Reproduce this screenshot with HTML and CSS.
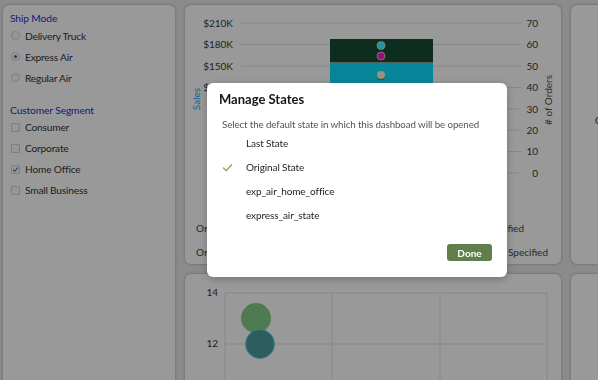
FILE: index.html
```html
<!DOCTYPE html>
<html lang="en">
<head>
<meta charset="utf-8">
<title>Dashboard - Manage States</title>
<link rel="stylesheet" href="styles.css">
</head>
<body>
<div class="dashboard">
  <aside class="panel filters">
    <div class="group">
      <h3 class="group-title">Ship Mode</h3>
      <div class="opt"><span class="radio"></span>Delivery Truck</div>
      <div class="opt"><span class="radio on"></span>Express Air</div>
      <div class="opt"><span class="radio"></span>Regular Air</div>
    </div>
    <div class="group">
      <h3 class="group-title">Customer Segment</h3>
      <div class="opt"><span class="check"></span>Consumer</div>
      <div class="opt"><span class="check"></span>Corporate</div>
      <div class="opt"><span class="check on"><svg viewBox="0 0 9 9" width="9" height="9"><path d="M1.5 4.6 L3.6 6.8 L7.6 2.2"/></svg></span>Home Office</div>
      <div class="opt"><span class="check"></span>Small Business</div>
    </div>
  </aside>

  <section class="panel chart-top">
    <svg class="chart" viewBox="0 0 376 259" width="376" height="259">
      <g class="grid">
        <line x1="56" x2="336" y1="18" y2="18"/>
        <line x1="56" x2="336" y1="39.5" y2="39.5"/>
        <line x1="56" x2="336" y1="61" y2="61"/>
        <line x1="56" x2="336" y1="82.5" y2="82.5"/>
        <line x1="56" x2="336" y1="104" y2="104"/>
        <line x1="56" x2="336" y1="125" y2="125"/>
        <line x1="56" x2="336" y1="146.5" y2="146.5"/>
        <line x1="56" x2="336" y1="168" y2="168"/>
      </g>
      <g class="tick" text-anchor="end">
        <text x="48" y="21.5">$210K</text>
        <text x="48" y="43">$180K</text>
        <text x="48" y="64.5">$150K</text>
        <text x="48" y="86">$120K</text>
        <text x="48" y="107.5">$90K</text>
        <text x="48" y="128.5">$60K</text>
        <text x="48" y="150">$30K</text>
        <text x="48" y="171.5">$0K</text>
      </g>
      <g class="tick" text-anchor="end">
        <text x="353" y="21.5">70</text>
        <text x="353" y="43">60</text>
        <text x="353" y="64.5">50</text>
        <text x="353" y="86">40</text>
        <text x="353" y="107.5">30</text>
        <text x="353" y="128.5">20</text>
        <text x="353" y="150">10</text>
        <text x="353" y="171.5">0</text>
      </g>
      <rect class="bar-dark" x="145" y="34" width="103" height="23.5"/>
      <rect class="bar-teal" x="145" y="58" width="103" height="60"/>
      <rect class="bar-olive" x="145" y="118" width="103" height="50"/>
      <circle class="dot-cyan" cx="196" cy="40.5" r="4"/>
      <circle class="dot-magenta" cx="196" cy="51" r="4"/>
      <circle class="dot-green" cx="196" cy="71" r="4"/>
      <circle class="dot-beige" cx="196" cy="70" r="4"/>
      <text class="axis-title sales" transform="translate(15 94) rotate(-90)" text-anchor="middle">Sales</text>
      <text class="axis-title orders" transform="translate(366.5 95) rotate(-90)" text-anchor="middle"># of Orders</text>
      <g class="legend">
        <text x="11" y="226.5">Order Priority</text>
        <text x="339" y="226.5" text-anchor="end">Not Specified</text>
        <text x="11" y="250.5">Order Date</text>
        <text x="363" y="250.5" text-anchor="end">Not Specified</text>
      </g>
    </svg>
  </section>

  <section class="panel side-top"><span class="cut-label">Category</span></section>

  <section class="panel chart-bottom">
    <svg class="chart" viewBox="0 0 376 220" width="376" height="220">
      <g class="grid">
        <rect x="40" y="19" width="322" height="200" fill="none"/>
        <line x1="147" x2="147" y1="19" y2="219"/>
        <line x1="255" x2="255" y1="19" y2="219"/>
        <line x1="40" x2="362" y1="70" y2="70"/>
        <line x1="40" x2="362" y1="121" y2="121"/>
        <line x1="40" x2="362" y1="172" y2="172"/>
      </g>
      <g class="tick" text-anchor="end">
        <text x="33" y="22">14</text>
        <text x="33" y="73">12</text>
      </g>
      <circle class="bubble-green" cx="71" cy="44" r="15"/>
      <circle class="bubble-teal" cx="75" cy="70" r="14.5"/>
    </svg>
  </section>

  <section class="panel side-bottom"></section>
</div>

<div class="scrim"></div>

<div class="dialog" role="dialog" aria-labelledby="dlg-title">
  <h2 class="dialog-title" id="dlg-title">Manage States</h2>
  <p class="dialog-text">Select the default state in which this dashboad will be opened</p>
  <ul class="state-list">
    <li class="state"><span class="state-mark"></span>Last State</li>
    <li class="state selected"><span class="state-mark"><svg viewBox="0 0 11 9" width="11" height="9"><path d="M1 4.6 L4.2 7.6 L10 1.4"/></svg></span>Original State</li>
    <li class="state"><span class="state-mark"></span>exp_air_home_office</li>
    <li class="state"><span class="state-mark"></span>express_air_state</li>
  </ul>
  <div class="dialog-footer">
    <button class="btn-done" type="button">Done</button>
  </div>
</div>
</body>
</html>
```

FILE: styles.css
```css
html, body {
  margin: 0;
  height: 100%;
  overflow: hidden;
}

body {
  background: #e8e8e8;
  font-family: Lato, "Liberation Sans", sans-serif;
  color: #333;
}

.dashboard {
  display: grid;
  grid-template-columns: 172px 376px 200px;
  grid-template-rows: 259px 220px;
  gap: 10px;
  padding: 5px 0 0 3px;
}

.panel {
  background: #fff;
  border-radius: 6px;
  box-shadow: 0 0 3px rgba(0, 0, 0, 0.3);
  overflow: hidden;
}

/* filters */
.filters {
  grid-row: 1 / 3;
  padding: 6px 8px 0 7px;
}

.group + .group {
  margin-top: 14.5px;
}

.group-title {
  margin: 0;
  font-size: 10.3px;
  line-height: 14px;
  font-weight: 400;
  letter-spacing: -0.15px;
  color: #2c2cd6;
}

.opt {
  display: flex;
  align-items: center;
  height: 21px;
  font-size: 10.2px;
  letter-spacing: -0.2px;
  color: #333;
  padding-left: 1px;
}

.radio,
.check {
  box-sizing: border-box;
  width: 9px;
  height: 9px;
  margin-right: 5px;
  border: 1px solid #d2d2d2;
  background: #fafafa;
  display: flex;
  align-items: center;
  justify-content: center;
}

.radio {
  border-radius: 50%;
}

.radio.on::after {
  content: "";
  width: 3px;
  height: 3px;
  border-radius: 50%;
  background: #1f6fd6;
}

.check {
  border-radius: 1px;
}

.check svg path {
  fill: none;
  stroke: #3f86dc;
  stroke-width: 1.5;
}

/* charts */
.chart {
  display: block;
  font-family: Lato, "Liberation Sans", sans-serif;
}

.grid line,
.grid rect {
  stroke: #e2e2e2;
  stroke-width: 1;
}

.tick text {
  font-size: 10px;
  fill: #3a3a3a;
}

.axis-title {
  font-size: 10px;
}

.sales {
  fill: #2a9cf2;
}

.orders {
  fill: #555;
}

.legend text {
  font-size: 10px;
  fill: #444;
}

.bar-dark { fill: #164c35; }
.bar-teal { fill: #10deff; }
.bar-olive { fill: #8fae6a; }

.dot-cyan { fill: #3ff2ff; stroke: #fff; stroke-width: 0.6; }
.dot-magenta { fill: #f21dcc; stroke: #fff; stroke-width: 0.6; }
.dot-green { fill: #3a8a40; }
.dot-beige { fill: #fbf6d6; }

.bubble-green { fill: #82cd88; }
.bubble-teal { fill: #4a9c9e; stroke: #66d8dc; stroke-width: 1; }

.side-top {
  padding: 109px 0 0 24px;
  font-size: 10px;
  color: #333;
}

.cut-label {
  white-space: nowrap;
}

/* modal */
.scrim {
  position: fixed;
  inset: 0;
  background: rgba(0, 0, 0, 0.4);
}

.dialog {
  position: fixed;
  left: 207px;
  top: 83px;
  width: 300px;
  height: 194px;
  box-sizing: border-box;
  padding: 8px 15px 16px 12px;
  background: #fff;
  border-radius: 6px;
  box-shadow: 0 2px 8px rgba(0, 0, 0, 0.25);
  display: flex;
  flex-direction: column;
}

.dialog-title {
  margin: 0;
  font-size: 13px;
  line-height: 16px;
  font-weight: 700;
  color: #161616;
}

.dialog-text {
  margin: 10px 0 0;
  padding-left: 3px;
  font-size: 9.75px;
  letter-spacing: -0.1px;
  line-height: 14px;
  white-space: nowrap;
  color: #555;
}

.state-list {
  list-style: none;
  margin: 0;
  padding: 0;
}

.state {
  display: grid;
  grid-template-columns: 27px 1fr;
  align-items: center;
  height: 24px;
  font-size: 10px;
  letter-spacing: -0.1px;
  color: #1e1e1e;
}

.state-mark {
  display: flex;
  align-items: center;
  padding-left: 3px;
}

.state-mark svg path {
  fill: none;
  stroke: #7c9c55;
  stroke-width: 1.3;
}

.dialog-footer {
  margin-top: auto;
  display: flex;
  justify-content: flex-end;
}

.btn-done {
  width: 45px;
  height: 17px;
  padding: 0;
  border: 0;
  border-radius: 3px;
  background: #607f4c;
  color: #fff;
  font-family: Lato, "Liberation Sans", sans-serif;
  font-size: 10px;
  font-weight: 700;
}
```
